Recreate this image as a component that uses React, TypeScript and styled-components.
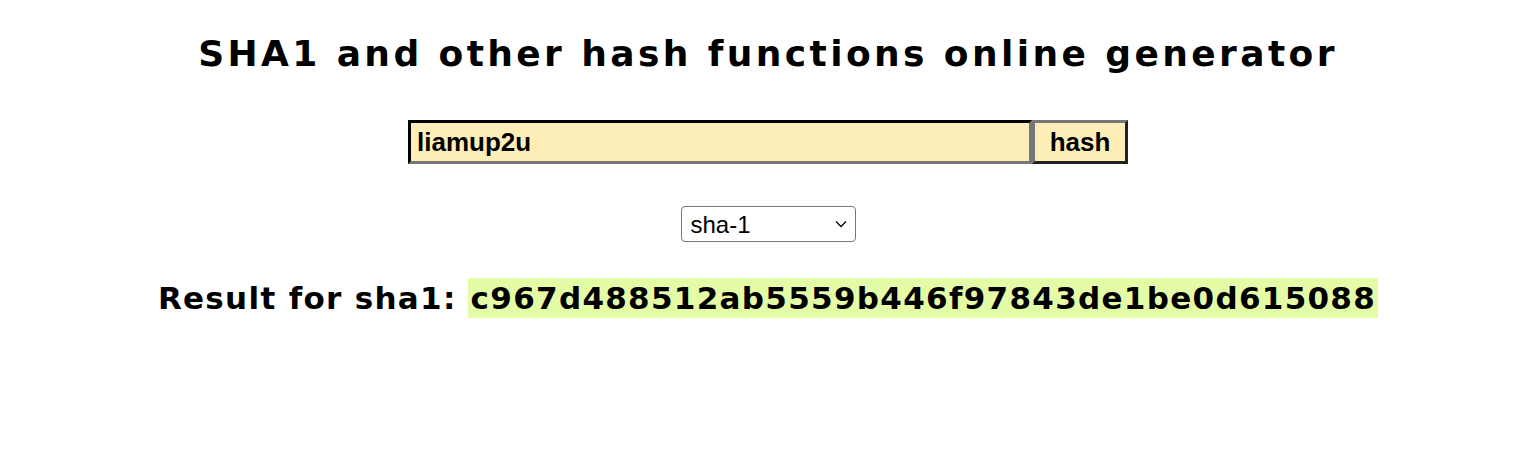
import React, { useState } from 'react'
import styled, { createGlobalStyle } from 'styled-components'

const GlobalStyle = createGlobalStyle`
  body {
    margin: 0;
    background: #fff;
    color: #000;
    font-family: "DejaVu Sans", Verdana, sans-serif;
  }
`

const Page = styled.div`
  display: flex;
  flex-direction: column;
  align-items: center;
  padding-top: 28px;
`

const Title = styled.h1`
  margin: 0;
  font-size: 36px;
  font-weight: bold;
  line-height: 52px;
  letter-spacing: 3.4px;
`

const HashForm = styled.form`
  display: flex;
  margin-top: 40px;
`

const TextInput = styled.input`
  box-sizing: border-box;
  width: 624px;
  height: 44px;
  border: 3px inset #777;
  border-top-color: #222;
  border-left-color: #222;
  background: #fdeeb8;
  padding: 0 6px;
  font-family: "Liberation Sans", Arial, sans-serif;
  font-weight: bold;
  font-size: 26px;
  color: #000;
  outline: none;
`

const HashButton = styled.button`
  box-sizing: border-box;
  width: 96px;
  height: 44px;
  border: 3px solid #222;
  border-top-color: #777;
  border-left-color: #777;
  background: #fdeeb8;
  font-family: "Liberation Sans", Arial, sans-serif;
  font-weight: bold;
  font-size: 26px;
  color: #000;
  padding: 0;
`

const SelectWrap = styled.div`
  position: relative;
  margin-top: 42px;
`

const AlgoSelect = styled.select`
  box-sizing: border-box;
  display: block;
  width: 175px;
  height: 36px;
  border: 1px solid #767676;
  border-radius: 4px;
  background: #fff;
  padding: 0 9px;
  font-family: "Liberation Sans", Arial, sans-serif;
  font-size: 24px;
  color: #000;
  appearance: none;
  -webkit-appearance: none;
`

const Chevron = styled.svg`
  position: absolute;
  right: 9px;
  top: 14px;
  width: 12px;
  height: 8px;
  pointer-events: none;
`

const ResultLine = styled.div`
  display: flex;
  align-items: center;
  gap: 11px;
  margin-top: 36px;
  font-size: 31px;
  font-weight: bold;
  letter-spacing: 1.3px;
`

const ResultLabel = styled.span``

const HashValue = styled.span`
  background: #e5fca6;
  padding: 0 2px 0 3px;
  line-height: 40px;
`

const App: React.FC = () => {
  const [text, setText] = useState('liamup2u')
  const [algo, setAlgo] = useState('sha1')

  return (
    <>
      <GlobalStyle />
      <Page>
        <Title>SHA1 and other hash functions online generator</Title>
        <HashForm onSubmit={(e) => e.preventDefault()}>
          <TextInput value={text} onChange={(e) => setText(e.target.value)} />
          <HashButton type="submit">hash</HashButton>
        </HashForm>
        <SelectWrap>
          <AlgoSelect value={algo} onChange={(e) => setAlgo(e.target.value)}>
            <option value="md2">md2</option>
            <option value="md4">md4</option>
            <option value="md5">md5</option>
            <option value="sha1">sha-1</option>
            <option value="sha256">sha-256</option>
            <option value="sha384">sha-384</option>
            <option value="sha512">sha-512</option>
          </AlgoSelect>
          <Chevron viewBox="0 0 12 8">
            <path d="M1 1.5 L6 6.5 L11 1.5" fill="none" stroke="#000" strokeWidth="1.3" />
          </Chevron>
        </SelectWrap>
        <ResultLine>
          <ResultLabel>Result for sha1:</ResultLabel>
          <HashValue>c967d488512ab5559b446f97843de1be0d615088</HashValue>
        </ResultLine>
      </Page>
    </>
  )
}

export default App
